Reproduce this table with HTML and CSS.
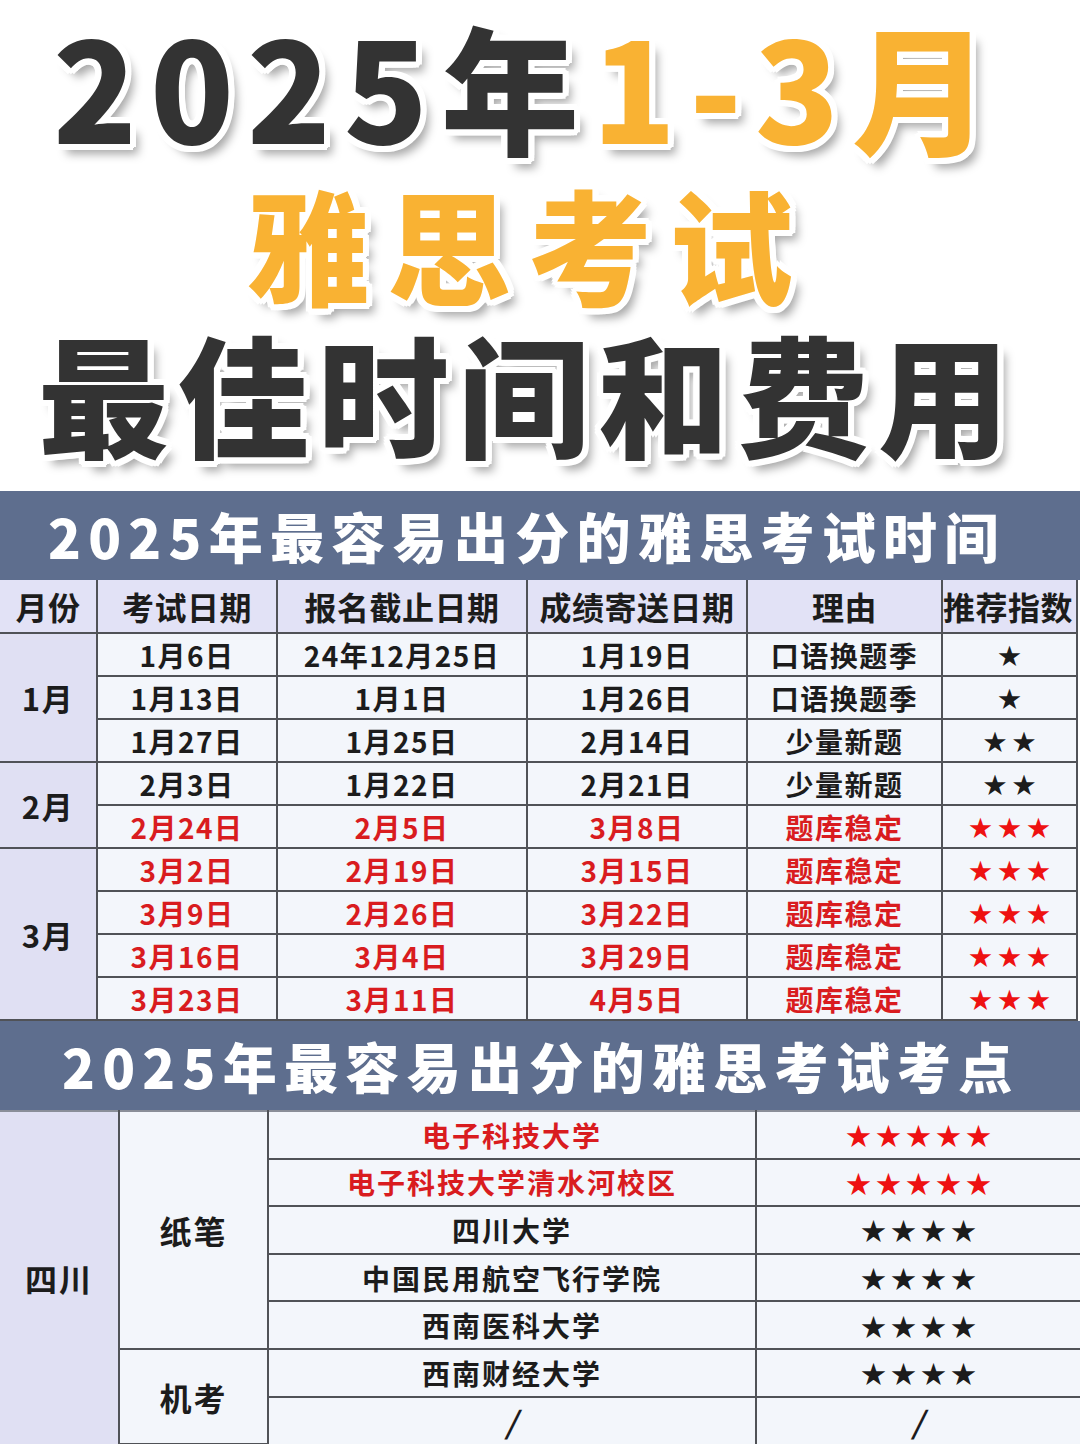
FILE: index.html
```html
<!DOCTYPE html>
<html lang="zh-CN">
<head>
<meta charset="utf-8">
<title>2025年1-3月雅思考试最佳时间和费用</title>
<link rel="stylesheet" href="styles.css">
</head>
<body>
<div class="page">
  <header class="hero">
    <div class="hero-line l1"><span class="dk">2025年</span><span class="yl">1-3月</span></div>
    <div class="hero-line l2">雅思考试</div>
    <div class="hero-line l3">最佳时间和费用</div>
  </header>

  <div class="banner b1">2025年最容易出分的雅思考试时间</div>
  <table class="t1">
    <colgroup>
      <col class="c-mon"><col class="c-exam"><col class="c-reg"><col class="c-score"><col class="c-why"><col class="c-star">
    </colgroup>
    <tr class="head">
      <th>月份</th><th>考试日期</th><th>报名截止日期</th><th>成绩寄送日期</th><th>理由</th><th class="nowrap">推荐指数</th>
    </tr>
    <tr>
      <td class="mon" rowspan="3">1月</td><td>1月6日</td><td>24年12月25日</td><td>1月19日</td><td>口语换题季</td><td class="star">★</td>
    </tr>
    <tr><td>1月13日</td><td>1月1日</td><td>1月26日</td><td>口语换题季</td><td class="star">★</td></tr>
    <tr><td>1月27日</td><td>1月25日</td><td>2月14日</td><td>少量新题</td><td class="star">★★</td></tr>
    <tr>
      <td class="mon" rowspan="2">2月</td><td>2月3日</td><td>1月22日</td><td>2月21日</td><td>少量新题</td><td class="star">★★</td>
    </tr>
    <tr class="red"><td>2月24日</td><td>2月5日</td><td>3月8日</td><td>题库稳定</td><td class="star">★★★</td></tr>
    <tr class="red">
      <td class="mon" rowspan="4">3月</td><td>3月2日</td><td>2月19日</td><td>3月15日</td><td>题库稳定</td><td class="star">★★★</td>
    </tr>
    <tr class="red"><td>3月9日</td><td>2月26日</td><td>3月22日</td><td>题库稳定</td><td class="star">★★★</td></tr>
    <tr class="red"><td>3月16日</td><td>3月4日</td><td>3月29日</td><td>题库稳定</td><td class="star">★★★</td></tr>
    <tr class="red"><td>3月23日</td><td>3月11日</td><td>4月5日</td><td>题库稳定</td><td class="star">★★★</td></tr>
  </table>

  <div class="banner b2">2025年最容易出分的雅思考试考点</div>
  <table class="t2">
    <colgroup>
      <col class="c-prov"><col class="c-type"><col class="c-site"><col class="c-rate">
    </colgroup>
    <tr class="red">
      <td class="prov" rowspan="7">四川</td><td class="type" rowspan="5">纸笔</td><td>电子科技大学</td><td class="star">★★★★★</td>
    </tr>
    <tr class="red"><td>电子科技大学清水河校区</td><td class="star">★★★★★</td></tr>
    <tr><td>四川大学</td><td class="star">★★★★</td></tr>
    <tr><td>中国民用航空飞行学院</td><td class="star">★★★★</td></tr>
    <tr><td>西南医科大学</td><td class="star">★★★★</td></tr>
    <tr><td class="type" rowspan="2">机考</td><td>西南财经大学</td><td class="star">★★★★</td></tr>
    <tr><td class="slash">/</td><td class="slash">/</td></tr>
  </table>
</div>
</body>
</html>
```

FILE: styles.css
```css
* {
  box-sizing: border-box;
  margin: 0;
  padding: 0;
}

html,
body {
  background: #ffffff;
}

body {
  width: 1080px;
  height: 1444px;
  overflow: hidden;
  font-family: "Noto Sans CJK SC", "Noto Sans", sans-serif;
  color: #1c1c1c;
}

.page {
  width: 1080px;
}

/* ---------- hero title ---------- */
.hero {
  height: 491px;
  display: flex;
  flex-direction: column;
  align-items: center;
  padding-top: 9px;
  padding-right: 24px;
}

.hero-line {
  font-weight: 900;
  line-height: 1.1;
  white-space: nowrap;
  text-shadow:
    6px 0 0 #fff, -6px 0 0 #fff, 0 6px 0 #fff, 0 -6px 0 #fff,
    4px 4px 0 #fff, -4px 4px 0 #fff, 4px -4px 0 #fff, -4px -4px 0 #fff,
    6px 3px 0 #fff, 6px -3px 0 #fff, -6px 3px 0 #fff, -6px -3px 0 #fff,
    3px 6px 0 #fff, -3px 6px 0 #fff, 3px -6px 0 #fff, -3px -6px 0 #fff,
    8px 10px 10px rgba(0, 0, 0, 0.35);
}

.l1 {
  font-size: 138px;
  letter-spacing: 13px;
}

.dk {
  color: #333333;
}

.yl {
  color: #f9b233;
}

.l2 {
  font-size: 124px;
  margin-top: 13px;
  letter-spacing: 17px;
  color: #f9b233;
}

.l3 {
  font-size: 131px;
  margin-top: 9px;
  letter-spacing: 9px;
  color: #333333;
}

/* ---------- section banners ---------- */
.banner {
  height: 89px;
  background: #5e6e8e;
  color: #ffffff;
  font-weight: 900;
  font-size: 54px;
  letter-spacing: 7.3px;
  display: flex;
  align-items: center;
  white-space: nowrap;
}

.b1 {
  padding-left: 48px;
}

.b2 {
  padding-left: 62px;
}

/* ---------- tables ---------- */
table {
  border-collapse: collapse;
  table-layout: fixed;
}

td,
th {
  border: 2px solid #505257;
  text-align: center;
  vertical-align: middle;
  background: #f3f6fb;
  font-weight: 700;
  white-space: nowrap;
  overflow: visible;
}

.t1 {
  width: 1077px;
}

.c-mon { width: 97px; }
.c-exam { width: 180px; }
.c-reg { width: 250px; }
.c-score { width: 220px; }
.c-why { width: 195px; }
.c-star { width: 135px; }

.t1 tr {
  height: 43px;
}

.t1 tr.head {
  height: 53px;
}

.t1 th {
  background: #e2e2f6;
  font-size: 32px;
  font-weight: 700;
  border-top: none;
  letter-spacing: 0.5px;
}

.t1 th.nowrap {
  text-align: left;
  padding-left: 0;
}

.t1 td {
  font-size: 28px;
  letter-spacing: 1.5px;
  line-height: 1;
}

.t1 td.mon {
  background: #e0e0f3;
  font-size: 31px;
  border-left: none;
}

.t1 th:first-child {
  border-left: none;
}

.red td {
  color: #d91c1f;
}

.red td.mon,
.red td.prov,
.red td.type {
  color: #1c1c1c;
}

td.star {
  font-size: 23px;
  letter-spacing: 6px;
  padding-left: 6px;
}

.red td.star {
  color: #ee1111;
}

.t2 {
  width: 1080px;
}

.c-prov { width: 119px; }
.c-type { width: 149px; }
.c-site { width: 488px; }
.c-rate { width: 324px; }

.t2 tr {
  height: 47.6px;
}

.t2 td {
  font-size: 28px;
  font-weight: 700;
  letter-spacing: 2px;
  line-height: 1;
}

.t2 tr:first-child td {
  border-top-color: #8a8e98;
}

.t2 td.prov {
  background: #e0e0f3;
  font-size: 32px;
  border-left: none;
  border-bottom: none;
}

.t2 td.type {
  font-size: 32px;
  color: #1c1c1c;
}

.t2 td.star {
  font-size: 25px;
  letter-spacing: 5px;
  padding-left: 5px;
}

.t2 td.slash {
  font-size: 30px;
  font-weight: 700;
  font-style: italic;
}

.t2 td:last-child {
  border-right: none;
}

.t2 tr:last-child td {
  border-bottom: none;
}
```
